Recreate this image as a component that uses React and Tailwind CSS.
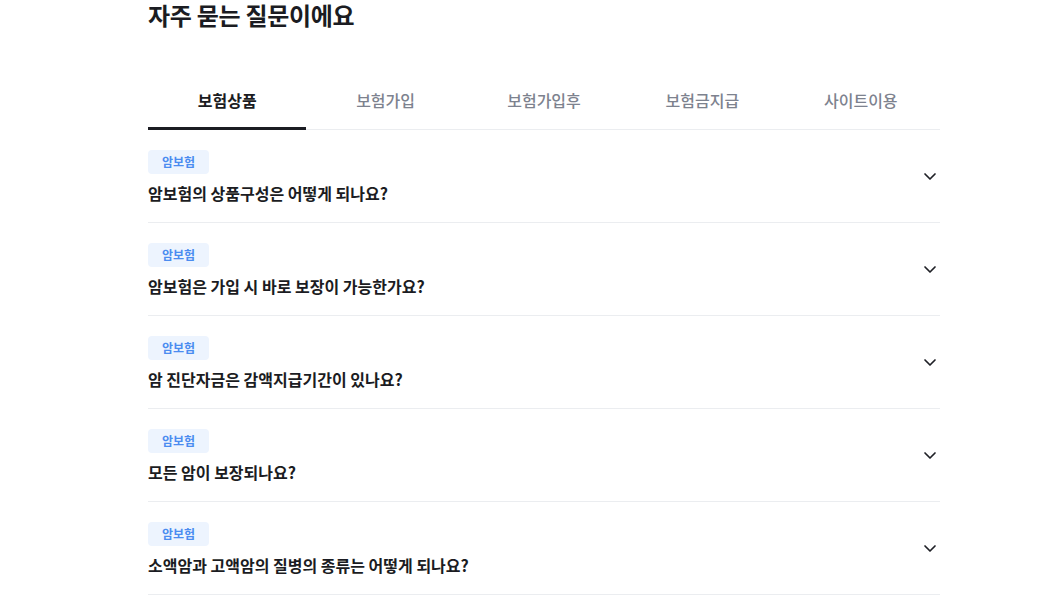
import React, { useState } from 'react'

const tabs = ['보험상품', '보험가입', '보험가입후', '보험금지급', '사이트이용']

const faqs = [
  '암보험의 상품구성은 어떻게 되나요?',
  '암보험은 가입 시 바로 보장이 가능한가요?',
  '암 진단자금은 감액지급기간이 있나요?',
  '모든 암이 보장되나요?',
  '소액암과 고액암의 질병의 종류는 어떻게 되나요?',
]

const Chevron = () => (
  <svg width="16" height="16" viewBox="0 0 16 16" fill="none">
    <path d="M3 6l5 5 5-5" stroke="#1f2026" strokeWidth="1.7" strokeLinecap="round" strokeLinejoin="round" />
  </svg>
)

const App = () => {
  const [active, setActive] = useState(0)

  return (
    <div className="min-h-screen bg-white" style={{ fontFamily: '"Noto Sans CJK KR", "Noto Sans", sans-serif' }}>
      <div className="w-[792px] ml-[148px]">
        <h2 className="text-[24px] font-bold text-[#1b1c22] leading-[30px] tracking-[-0.3px]">
          자주 묻는 질문이에요
        </h2>

        <div className="mt-[53px] grid grid-cols-5 border-b border-[#ebedf0]">
          {tabs.map((t, i) => (
            <button
              key={t}
              onClick={() => setActive(i)}
              className={
                i === active
                  ? 'h-[47px] pb-[10px] text-[16px] font-bold text-[#1b1c22] border-b-[3px] border-[#1b1c22] -mb-px leading-[24px]'
                  : 'h-[47px] pb-[10px] text-[16px] font-medium text-[#7d828e] border-b-[3px] border-transparent -mb-px leading-[24px]'
              }
            >
              {t}
            </button>
          ))}
        </div>

        {faqs.map((q) => (
          <div key={q} className="flex items-center justify-between border-b border-[#ebedf0] h-[93px]">
            <div className="flex flex-col items-start pt-[2px]">
              <span className="h-[24px] px-[14px] rounded-[4px] bg-[#edf4fe] text-[#4b8cf0] text-[12px] font-bold leading-[24px]">
                암보험
              </span>
              <p className="mt-[8px] text-[16px] font-bold text-[#1b1c22] leading-[22px]">{q}</p>
            </div>
            <div className="mr-[2px] -mt-[1px]">
              <Chevron />
            </div>
          </div>
        ))}
      </div>
    </div>
  )
}

export default App
